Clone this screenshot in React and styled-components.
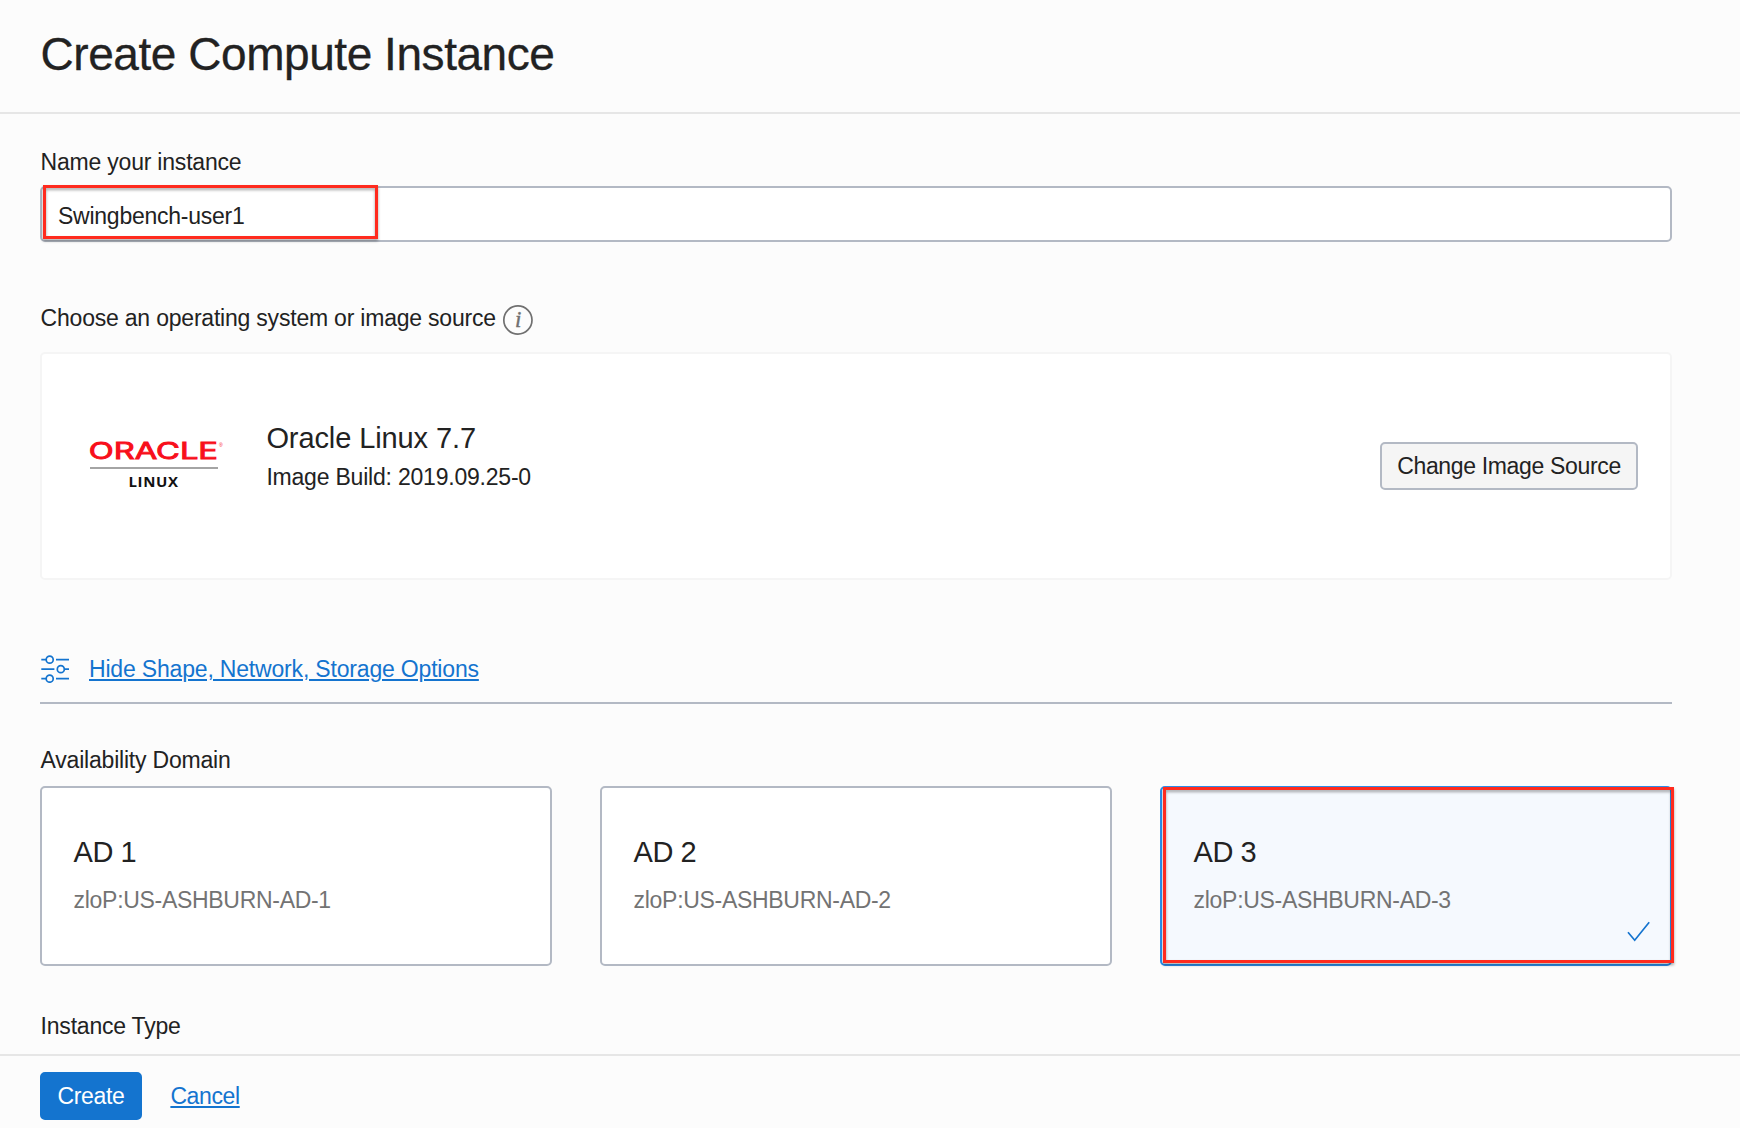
import React from "react";
import styled, { createGlobalStyle } from "styled-components";

const GlobalStyle = createGlobalStyle`
  *, *::before, *::after { box-sizing: border-box; }
  body {
    margin: 0;
    background: #fcfcfc;
    color: #222;
    font-family: "Liberation Sans", Arial, sans-serif;
    font-size: 23px;
    line-height: 26px;
    letter-spacing: -0.21px;
  }
`;

const Page = styled.div`
  display: flex;
  flex-direction: column;
  height: 1128px;
  overflow: hidden;
`;

const Header = styled.header`
  flex: none;
  height: 114px;
  padding: 28px 40.6px 0;
  border-bottom: 2px solid #e6e6e6;
`;

const Title = styled.h1`
  margin: 0;
  font-size: 46px;
  font-weight: 400;
  line-height: 52px;
  letter-spacing: -0.45px;
  -webkit-text-stroke: 0.3px currentColor;
`;

const Main = styled.main`
  flex: 1;
  min-height: 0;
  overflow: hidden;
  padding: 35px 68px 0 40px;
`;

const Section = styled.section`
  margin-bottom: ${(p) => p.$space}px;
`;

const Label = styled.div`
  margin-bottom: ${(p) => p.$space || 0}px;
  padding-left: 0.6px;
  white-space: nowrap;
`;

const LabelRow = styled.div`
  display: flex;
  gap: 6px;
  height: 30px;
  margin-bottom: 17px;
`;

const Field = styled.div`
  position: relative;
  height: 56px;
  padding: 15px 16px;
  background: #fff;
  border: 2px solid #b3b9c4;
  border-radius: 5px;
  letter-spacing: -0.25px;
`;

const Marker = styled.div`
  position: absolute;
  top: ${(p) => p.$top}px;
  left: ${(p) => p.$left}px;
  width: ${(p) => p.$width}px;
  height: ${(p) => p.$height}px;
  border: 3px solid #ff2b1e;
  filter: drop-shadow(0 2px 1.5px rgba(0, 0, 0, 0.35));
  pointer-events: none;
`;

const ImageCard = styled.div`
  display: flex;
  align-items: center;
  height: 228px;
  padding: 0 32px 0 48px;
  background: #fff;
  border: 2px solid #f5f5f5;
  border-radius: 5px;
`;

const Logo = styled.svg`
  overflow: visible;
  margin-bottom: 2px;
`;

const ImageText = styled.div`
  flex: 1;
  margin: 0 0 20px 40.4px;
`;

const Heading = styled.div`
  font-size: 29px;
  line-height: 32px;
  letter-spacing: ${(p) => p.$tracking}px;
  margin-bottom: ${(p) => p.$space}px;
`;

const Button = styled.button`
  width: ${(p) => p.$width}px;
  height: 48px;
  padding: 0;
  border: 2px solid ${(p) => (p.$primary ? "#1474cf" : "#b3b9c4")};
  border-radius: 5px;
  background: ${(p) => (p.$primary ? "#1474cf" : "#f5f5f5")};
  color: ${(p) => (p.$primary ? "#fff" : "#222")};
  font: inherit;
  letter-spacing: -0.34px;
`;

const Link = styled.a`
  color: #1474cf;
  text-decoration: underline;
  text-decoration-thickness: 2px;
  text-underline-offset: 2px;
  letter-spacing: ${(p) => p.$tracking}px;
`;

const OptionsBar = styled.div`
  display: flex;
  align-items: center;
  gap: 19px;
  height: 49px;
  padding-bottom: 20px;
  border-bottom: 2px solid #b3b9c4;
  margin-bottom: 43px;
`;

const Domains = styled.div`
  display: grid;
  grid-template-columns: repeat(3, 1fr);
  gap: 48px;
`;

const DomainCard = styled.div`
  position: relative;
  height: 180px;
  padding: 48px 31.6px;
  background: ${(p) => (p.$selected ? "#f5f9fe" : "#fff")};
  border: 2px solid ${(p) => (p.$selected ? "#2d8eea" : "#b3b9c4")};
  border-radius: 5px;
`;

const DomainName = styled.div`
  color: #737373;
  letter-spacing: -0.3px;
`;

const Tick = styled.svg`
  position: absolute;
  right: 20px;
  bottom: 20px;
`;

const Footer = styled.footer`
  flex: none;
  display: flex;
  align-items: flex-start;
  gap: 28px;
  height: 74px;
  padding: 16px 40px 0;
  border-top: 2px solid #e6e6e6;
`;

const FooterLink = styled.div`
  padding: 11px 0 0 0.4px;
`;

function InfoIcon() {
  return (
    <svg width="31" height="30" viewBox="0 0 31 30">
      <circle cx="15.9" cy="15" r="14.1" fill="none" stroke="#707070" strokeWidth="1.7" />
      <text
        x="16"
        y="21.8"
        textAnchor="middle"
        fill="#707070"
        fontFamily="Liberation Serif, serif"
        fontStyle="italic"
        fontWeight="400"
        fontSize="23"
        stroke="#707070"
        strokeWidth="0.4"
      >
        i
      </text>
    </svg>
  );
}

function OracleLinuxLogo() {
  return (
    <Logo width="136" height="50" viewBox="0 0 136 50">
      <text
        transform="translate(-1.2 19.2) scale(1.61 1)"
        fontFamily="Inter, sans-serif"
        fontSize="22.6"
        fontWeight="400"
        letterSpacing="0"
        textLength="80.2"
        lengthAdjust="spacingAndGlyphs"
        fill="#f80f1b"
        stroke="#f80f1b"
        strokeWidth="0.9"
      >
        ORACLE
      </text>
      <text x="129" y="6.5" fontSize="5" fill="#f80f1b" letterSpacing="0">
        ®
      </text>
      <path d="M0 28H128" stroke="#4a4a4a" strokeWidth="1.2" />
      <text
        x="38.4"
        y="47"
        fontFamily="Open Sans, sans-serif"
        fontSize="15"
        fontWeight="700"
        letterSpacing="0"
        textLength="49.6"
        lengthAdjust="spacing"
        fill="#111"
      >
        LINUX
      </text>
    </Logo>
  );
}

function SlidersIcon() {
  return (
    <svg width="30" height="28" viewBox="0 0 30 28" fill="none" stroke="#1474cf" strokeWidth="1.7">
      <path d="M1.3 4.7H6M16 4.7H29M1.3 14.2H14.4M24.8 14.2H29M1.3 23.7H6M16 23.7H29" />
      <circle cx="9.7" cy="4.7" r="3.5" />
      <circle cx="20.8" cy="14.2" r="3.5" />
      <circle cx="9.7" cy="23.7" r="3.5" />
    </svg>
  );
}

const domains = [
  { title: "AD 1", name: "zloP:US-ASHBURN-AD-1" },
  { title: "AD 2", name: "zloP:US-ASHBURN-AD-2" },
  { title: "AD 3", name: "zloP:US-ASHBURN-AD-3", selected: true },
];

export default function App() {
  return (
    <Page>
      <GlobalStyle />
      <Header>
        <Title>Create Compute Instance</Title>
      </Header>
      <Main>
        <Section $space={63}>
          <Label $space={11}>Name your instance</Label>
          <Field>
            Swingbench-user1
            <Marker $top={-3} $left={1} $width={335} $height={54} />
          </Field>
        </Section>
        <Section $space={75}>
          <LabelRow>
            <Label>Choose an operating system or image source</Label>
            <InfoIcon />
          </LabelRow>
          <ImageCard>
            <OracleLinuxLogo />
            <ImageText>
              <Heading $space={10} $tracking={-0.1}>Oracle Linux 7.7</Heading>
              <div>Image Build: 2019.09.25-0</div>
            </ImageText>
            <Button $width={258}>Change Image Source</Button>
          </ImageCard>
        </Section>
        <OptionsBar>
          <SlidersIcon />
          <Link $tracking={-0.18}>Hide Shape, Network, Storage Options</Link>
        </OptionsBar>
        <Section $space={47}>
          <Label $space={13}>Availability Domain</Label>
          <Domains>
            {domains.map((d) => (
              <DomainCard key={d.title} $selected={d.selected}>
                <Heading $space={19} $tracking={-0.5}>{d.title}</Heading>
                <DomainName>{d.name}</DomainName>
                {d.selected && (
                  <Tick width="26" height="24" viewBox="0 0 26 24">
                    <path
                      d="M4 12.3L10.7 20.2L25.2 2.3"
                      fill="none"
                      stroke="#1474cf"
                      strokeWidth="1.7"
                    />
                  </Tick>
                )}
                {d.selected && <Marker $top={-1} $left={1} $width={511} $height={176} />}
              </DomainCard>
            ))}
          </Domains>
        </Section>
        <Label>Instance Type</Label>
      </Main>
      <Footer>
        <Button $primary $width={102}>Create</Button>
        <FooterLink>
          <Link $tracking={-0.38}>Cancel</Link>
        </FooterLink>
      </Footer>
    </Page>
  );
}
